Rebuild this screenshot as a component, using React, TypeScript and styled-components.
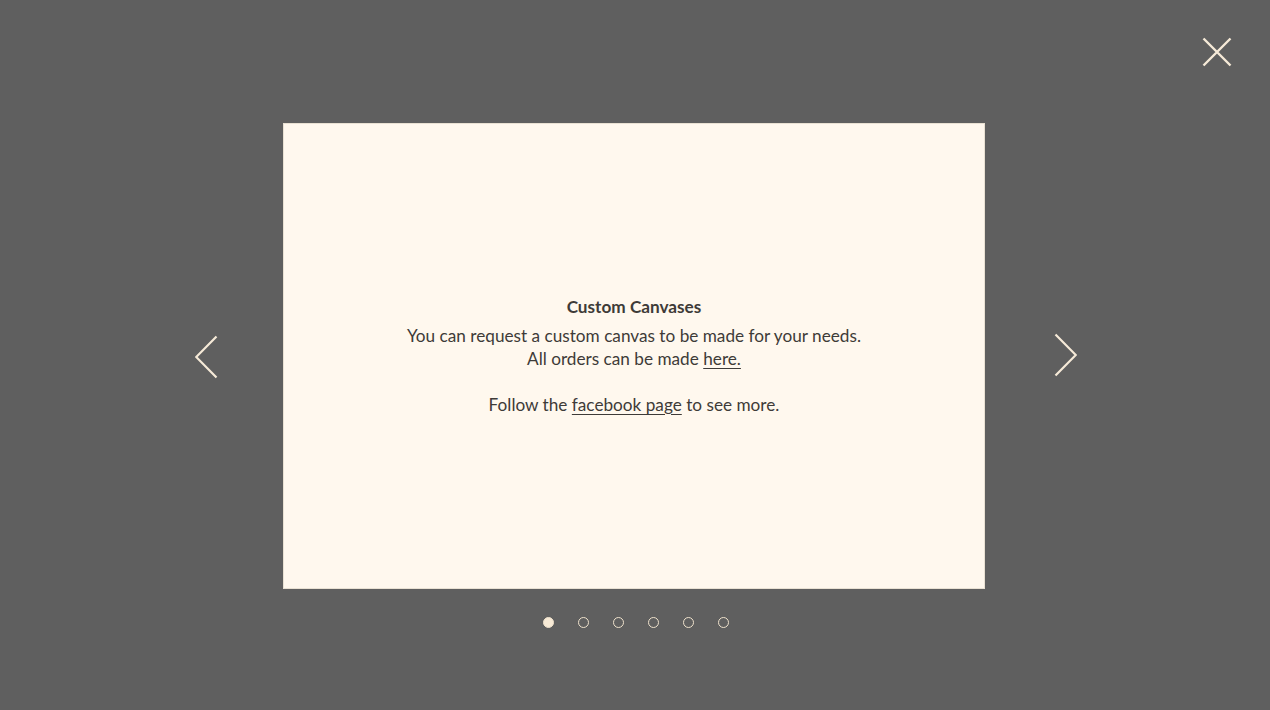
import React from "react";
import styled, { createGlobalStyle } from "styled-components";

const Global = createGlobalStyle`
  html, body { margin: 0; padding: 0; }
  body { background: #5f5f5f; font-family: "Lato", "Noto Sans", sans-serif; }
`;

const Overlay = styled.div`
  width: 1270px;
  height: 710px;
  background: #5f5f5f;
  position: relative;
  display: flex;
  flex-direction: column;
  align-items: center;
  padding-top: 124px;
  padding-left: 2px;
  box-sizing: border-box;
`;

const Stage = styled.div`
  display: flex;
  align-items: center;
`;

const Arrow = styled.button<{ $side: "left" | "right" }>`
  background: none;
  border: none;
  padding: 0;
  width: ${(p) => (p.$side === "left" ? "89px" : "93px")};
  height: 50px;
  display: flex;
  align-items: center;
  justify-content: ${(p) => (p.$side === "left" ? "flex-start" : "flex-end")};
  cursor: pointer;
`;

const Card = styled.div`
  width: 700px;
  height: 464px;
  box-sizing: border-box;
  padding-bottom: 2px;
  background: #fff8ee;
  box-shadow: 0 0 0 1px #e9e1d3;
  display: flex;
  flex-direction: column;
  align-items: center;
  justify-content: center;
  color: #3e3b38;
  font-size: 17.2px;
  line-height: 23px;
  text-align: center;
`;

const Title = styled.div`
  font-weight: 700;
  margin-bottom: 6px;
`;

const Line = styled.div<{ $gap?: boolean }>`
  margin-top: ${(p) => (p.$gap ? "23px" : "0")};
`;

const Link = styled.a`
  color: inherit;
  text-decoration: underline;
  text-underline-offset: 3px;
`;

const Dots = styled.div`
  display: flex;
  gap: 24px;
  margin-top: 29px;
`;

const Dot = styled.span<{ $active?: boolean }>`
  width: 11px;
  height: 11px;
  box-sizing: border-box;
  border-radius: 50%;
  border: 1.5px solid #efe2cc;
  background: ${(p) => (p.$active ? "#f7ead6" : "transparent")};
`;

const Close = styled.button`
  position: absolute;
  top: 37px;
  right: 38px;
  background: none;
  border: none;
  padding: 0;
  width: 30px;
  height: 30px;
  cursor: pointer;
`;

const stroke = "#f6ead8";

export default function App() {
  return (
    <>
      <Global />
      <Overlay>
        <Close aria-label="close">
          <svg width="30" height="30" viewBox="0 0 30 30">
            <path d="M1.5 1.5 L28.5 28.5 M28.5 1.5 L1.5 28.5" stroke={stroke} strokeWidth="2.4" fill="none" />
          </svg>
        </Close>
        <Stage>
          <Arrow $side="left" aria-label="previous">
            <svg width="30" height="50" viewBox="0 0 30 50">
              <path d="M21.5 5.5 L1.2 26 L21.5 46.5" stroke={stroke} strokeWidth="2.2" fill="none" />
            </svg>
          </Arrow>
          <Card>
            <Title>Custom Canvases</Title>
            <Line>You can request a custom canvas to be made for your needs.</Line>
            <Line>
              All orders can be made <Link href="#">here.</Link>
            </Line>
            <Line $gap>
              Follow the <Link href="#">facebook page</Link> to see more.
            </Line>
          </Card>
          <Arrow $side="right" aria-label="next">
            <svg width="30" height="50" viewBox="0 0 30 50">
              <path d="M8.5 3.5 L28.8 24 L8.5 44.5" stroke={stroke} strokeWidth="2.2" fill="none" />
            </svg>
          </Arrow>
        </Stage>
        <Dots>
          <Dot $active />
          <Dot />
          <Dot />
          <Dot />
          <Dot />
          <Dot />
        </Dots>
      </Overlay>
    </>
  );
}
